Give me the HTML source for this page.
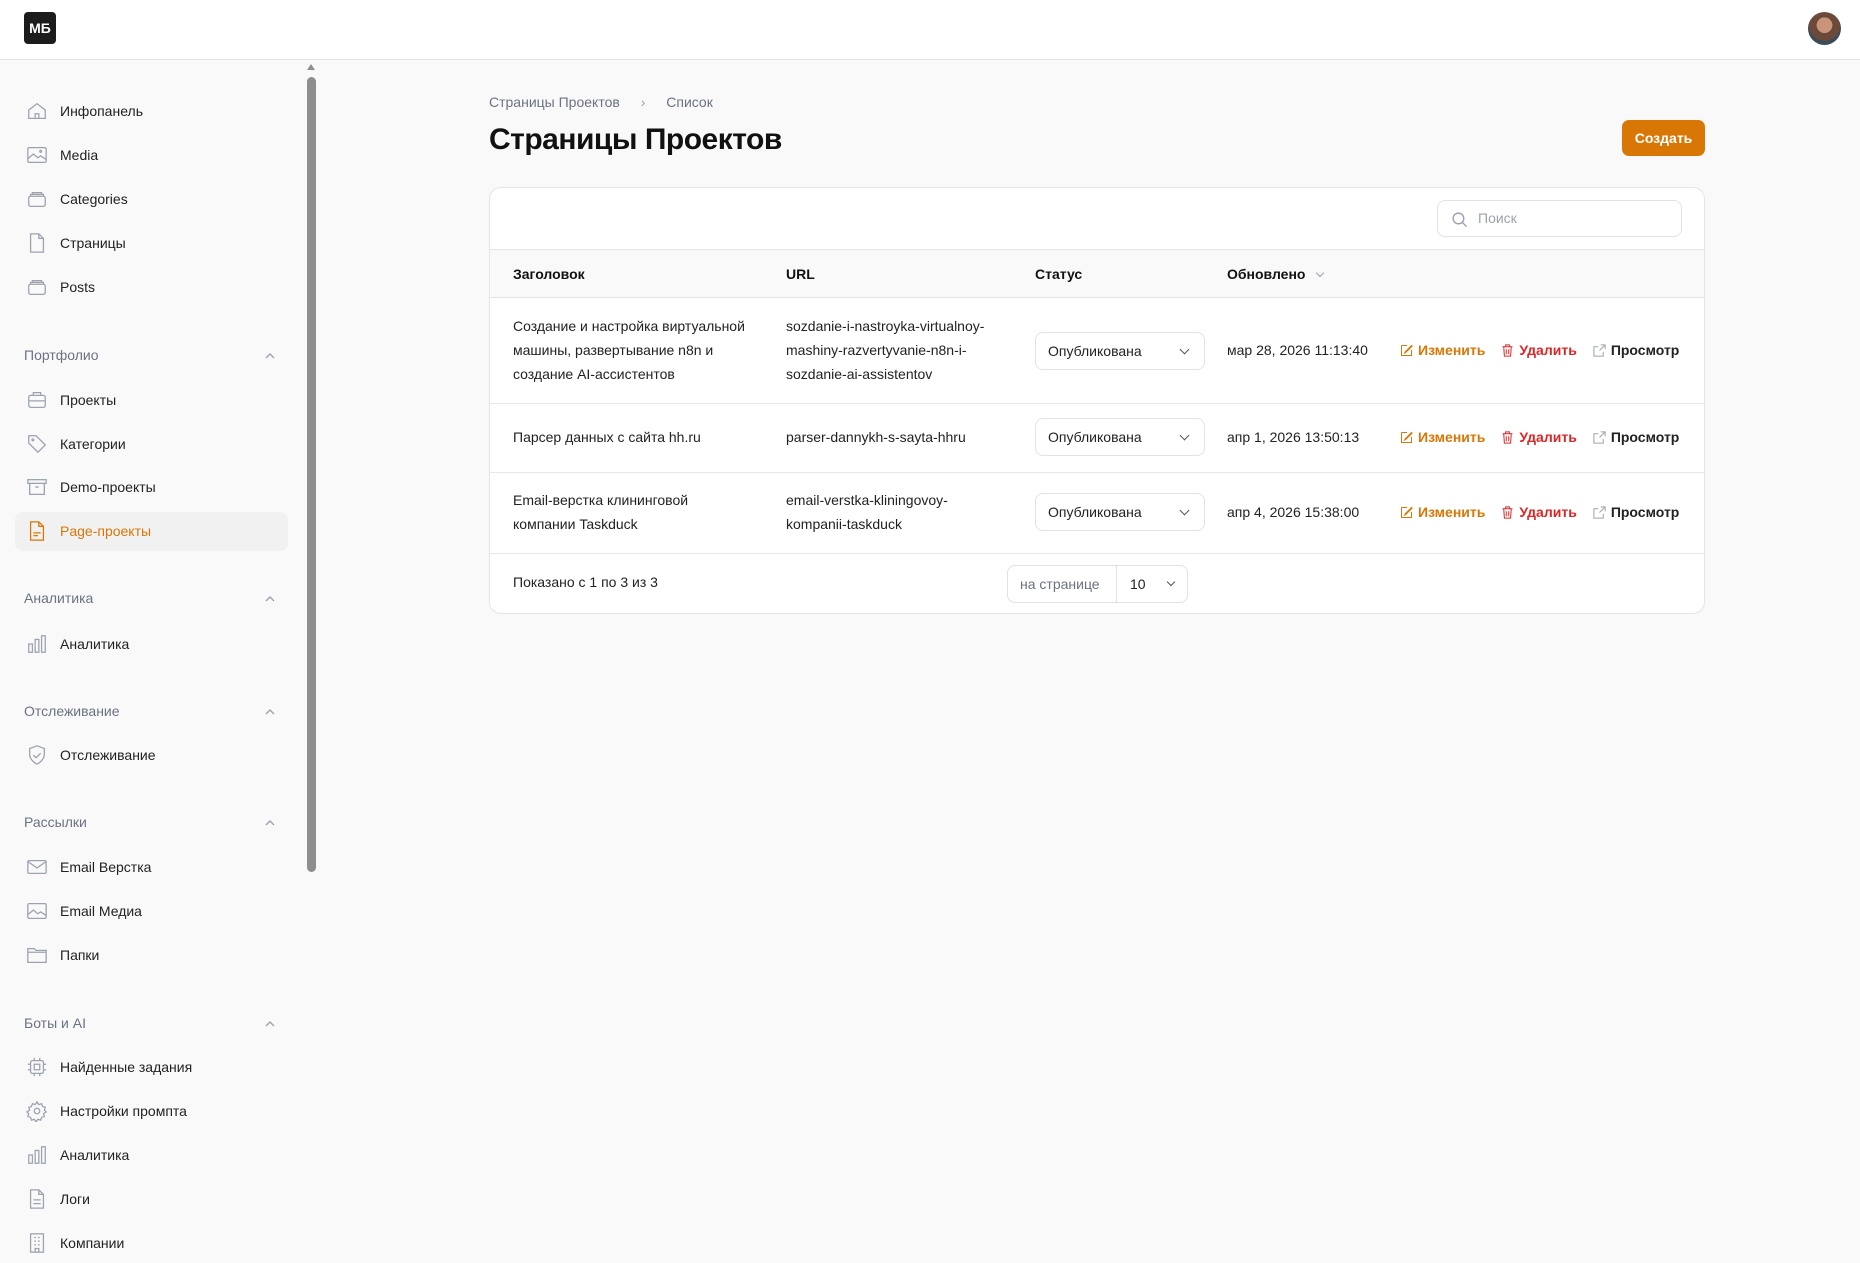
<!DOCTYPE html>
<html><head><meta charset="utf-8">
<style>
*{box-sizing:border-box;margin:0;padding:0}
body{width:1860px;height:1263px;overflow:hidden;background:#f9f9f9;font-family:"Liberation Sans","Noto Sans CJK SC",sans-serif;color:#111;position:relative;font-size:14px}
.hdr{position:absolute;left:0;top:0;width:1860px;height:60px;background:#fff;border-bottom:1px solid #e5e5e5}
.logo{position:absolute;left:24px;top:12px;width:32px;height:32px;background:#1c1c1c;border-radius:4px;color:#fff;font-weight:bold;font-size:14px;line-height:32px;text-align:center}
.av{position:absolute;left:1808px;top:12px;width:33px;height:33px;border-radius:50%;background:radial-gradient(circle at 50% 40%,#c99479 0 30%,#6b4a3a 31% 60%,#3b4b5a 61%)}
.sb{position:absolute;left:0;top:61px;width:305px;height:1202px;background:#f9f9f9}
.scr{position:absolute;left:307px;top:77px;width:9px;height:795px;background:#8e8e8e;border-radius:5px}
.scra{position:absolute;left:307px;top:64px;width:0;height:0;border-left:4.5px solid transparent;border-right:4.5px solid transparent;border-bottom:6px solid #8e8e8e}
.it{position:absolute;left:26px;height:24px;display:flex;align-items:center;font-size:14px;color:#222}
.it svg{width:22px;height:22px;margin-right:12px;fill:none;stroke:#9ca3af;stroke-width:1.4}
.sec{position:absolute;left:24px;font-size:14px;color:#6b7280}
.chev{position:absolute;left:263px;width:14px;height:14px}
.act{position:absolute;left:15px;top:512px;width:273px;height:39px;background:#f1f1f1;border-radius:8px}
.main{position:absolute;left:489px}
.card{position:absolute;left:489px;top:187px;width:1216px;height:427px;background:#fff;border:1px solid #e5e5e5;border-radius:12px;overflow:hidden}
.th{position:absolute;left:0;top:61px;width:100%;height:49px;background:#f9f9f9;border-top:1px solid #e5e5e5;border-bottom:1px solid #e5e5e5}
.t{position:absolute;font-size:14px;line-height:24px;color:#222}
.b{font-weight:bold;color:#111}
.line{position:absolute;left:0;width:100%;height:1px;background:#e8e8e8}
.sel{position:absolute;left:545px;width:170px;height:38px;border:1px solid #e2e2e2;border-radius:8px;font-size:14px;line-height:36px;padding-left:12px;color:#222;background:#fff}
.sel:after{content:"";position:absolute;right:16px;top:13px;width:6px;height:6px;border-right:1.5px solid #555;border-bottom:1.5px solid #555;transform:rotate(45deg)}
.acts{position:absolute;left:909px;display:flex;align-items:center;font-size:14px;font-weight:bold}
.acts svg{width:15px;height:15px;margin-right:4px;fill:none;stroke-width:1.6}
</style></head><body>
<div class="hdr"><div class="logo">МБ</div><div class="av"></div></div>
<div class="sb"></div>
<div class="scra"></div><div class="scr"></div>
<div class="act"></div>

<div class="it" style="top:99px"><svg viewBox="0 0 24 24"><path d="M3 11l9-7 9 7v9H3z M10 20v-5h4v5"/></svg>Инфопанель</div>
<div class="it" style="top:143px"><svg viewBox="0 0 24 24"><rect x="2" y="4" width="20" height="16" rx="1.5"/><path d="M2 16l6-5 5 4 3-2 6 4"/><circle cx="16" cy="8" r="1"/></svg>Media</div>
<div class="it" style="top:187px"><svg viewBox="0 0 24 24"><rect x="3" y="9" width="18" height="11" rx="2"/><path d="M5 9V7h14v2M7 7V5h10v2"/></svg>Categories</div>
<div class="it" style="top:231px"><svg viewBox="0 0 24 24"><path d="M5 2h9l5 5v15H5z M14 2v5h5"/></svg>Страницы</div>
<div class="it" style="top:275px"><svg viewBox="0 0 24 24"><rect x="3" y="9" width="18" height="11" rx="2"/><path d="M5 9V7h14v2M7 7V5h10v2"/></svg>Posts</div>

<div class="sec" style="top:347px">Портфолио</div>
<svg class="chev" style="top:349px" viewBox="0 0 14 14" fill="none" stroke="#9ca3af" stroke-width="1.4"><path d="M3 9l4-4 4 4"/></svg>
<div class="it" style="top:388px"><svg viewBox="0 0 24 24"><rect x="3" y="7" width="18" height="13" rx="2"/><path d="M8 7V4h8v3M3 13h18"/></svg>Проекты</div>
<div class="it" style="top:432px"><svg viewBox="0 0 24 24"><path d="M3 3h8l10 10-8 8L3 11z"/><circle cx="7.5" cy="7.5" r="1"/></svg>Категории</div>
<div class="it" style="top:475px"><svg viewBox="0 0 24 24"><rect x="2" y="4" width="20" height="4"/><path d="M4 8v12h16V8M10 12h4"/></svg>Demo-проекты</div>
<div class="it" style="top:519px;color:#d97706"><svg viewBox="0 0 24 24" style="stroke:#d97706"><path d="M5 2h9l5 5v15H5z M14 2v5h5M8 14h8M8 17h5"/></svg>Page-проекты</div>

<div class="sec" style="top:590px">Аналитика</div>
<svg class="chev" style="top:592px" viewBox="0 0 14 14" fill="none" stroke="#9ca3af" stroke-width="1.4"><path d="M3 9l4-4 4 4"/></svg>
<div class="it" style="top:632px"><svg viewBox="0 0 24 24"><rect x="3" y="12" width="4" height="9"/><rect x="10" y="7" width="4" height="14"/><rect x="17" y="3" width="4" height="18"/></svg>Аналитика</div>

<div class="sec" style="top:703px">Отслеживание</div>
<svg class="chev" style="top:705px" viewBox="0 0 14 14" fill="none" stroke="#9ca3af" stroke-width="1.4"><path d="M3 9l4-4 4 4"/></svg>
<div class="it" style="top:743px"><svg viewBox="0 0 24 24"><path d="M12 2l8 3v6c0 5-4 9-8 11-4-2-8-6-8-11V5z M8 12l3 3 5-5"/></svg>Отслеживание</div>

<div class="sec" style="top:814px">Рассылки</div>
<svg class="chev" style="top:816px" viewBox="0 0 14 14" fill="none" stroke="#9ca3af" stroke-width="1.4"><path d="M3 9l4-4 4 4"/></svg>
<div class="it" style="top:855px"><svg viewBox="0 0 24 24"><rect x="2" y="5" width="20" height="14" rx="1.5"/><path d="M2 6l10 7 10-7"/></svg>Email Верстка</div>
<div class="it" style="top:899px"><svg viewBox="0 0 24 24"><rect x="2" y="4" width="20" height="16" rx="1.5"/><path d="M2 16l6-5 5 4 3-2 6 4"/></svg>Email Медиа</div>
<div class="it" style="top:943px"><svg viewBox="0 0 24 24"><path d="M2 5h7l2 2h11v13H2z M2 9h20"/></svg>Папки</div>

<div class="sec" style="top:1015px">Боты и AI</div>
<svg class="chev" style="top:1017px" viewBox="0 0 14 14" fill="none" stroke="#9ca3af" stroke-width="1.4"><path d="M3 9l4-4 4 4"/></svg>
<div class="it" style="top:1055px"><svg viewBox="0 0 24 24"><rect x="5" y="5" width="14" height="14" rx="2"/><rect x="9" y="9" width="6" height="6"/><path d="M9 2v3M15 2v3M9 19v3M15 19v3M2 9h3M2 15h3M19 9h3M19 15h3"/></svg>Найденные задания</div>
<div class="it" style="top:1099px"><svg viewBox="0 0 24 24"><circle cx="12" cy="12" r="3"/><path d="M12 2l2 3 3-1 1 3 3 1-1 3 2 2-3 2 1 3-3 1-1 3-3-1-2 3-2-3-3 1-1-3-3-1 1-3-2-2 3-2-1-3 3-1 1-3 3 1z"/></svg>Настройки промпта</div>
<div class="it" style="top:1143px"><svg viewBox="0 0 24 24"><rect x="3" y="12" width="4" height="9"/><rect x="10" y="7" width="4" height="14"/><rect x="17" y="3" width="4" height="18"/></svg>Аналитика</div>
<div class="it" style="top:1187px"><svg viewBox="0 0 24 24"><path d="M5 2h9l5 5v15H5z M14 2v5h5M8 13h8M8 17h8"/></svg>Логи</div>
<div class="it" style="top:1231px"><svg viewBox="0 0 24 24"><rect x="5" y="2" width="14" height="20"/><path d="M9 6h2M13 6h2M9 10h2M13 10h2M9 14h2M13 14h2M10 22v-4h4v4"/></svg>Компании</div>

<div class="main" style="top:94px;font-size:14px;color:#6b7280">Страницы Проектов <span style="margin:0 17px 0 17px;color:#9ca3af">›</span> Список</div>
<div class="main" style="top:123px;font-size:30px;font-weight:bold;color:#111;letter-spacing:-0.5px">Страницы Проектов</div>
<div style="position:absolute;left:1622px;top:120px;width:83px;height:36px;background:#d97706;border-radius:7px;color:#fff;font-weight:bold;font-size:14px;line-height:36px;text-align:center">Создать</div>

<div class="card">
  <div style="position:absolute;left:947px;top:12px;width:245px;height:37px;border:1px solid #e2e2e2;border-radius:8px">
    <svg style="position:absolute;left:13px;top:10px" width="17" height="17" viewBox="0 0 24 24" fill="none" stroke="#9ca3af" stroke-width="2"><circle cx="10.5" cy="10.5" r="7.5"/><path d="M16 16l6 6"/></svg>
    <span style="position:absolute;left:40px;top:9px;color:#9ca3af;font-size:14px">Поиск</span>
  </div>
  <div class="th"></div>
  <div class="t b" style="left:23px;top:74px">Заголовок</div>
  <div class="t b" style="left:296px;top:74px">URL</div>
  <div class="t b" style="left:545px;top:74px">Статус</div>
  <div class="t b" style="left:737px;top:74px">Обновлено <span style="display:inline-block;width:6px;height:6px;border-right:1.3px solid #9ca3af;border-bottom:1.3px solid #9ca3af;transform:rotate(45deg);margin:0 0 3px 8px"></span></div>

  <div class="t" style="left:23px;top:126px">Создание и настройка виртуальной<br>машины, развертывание n8n и<br>создание AI-ассистентов</div>
  <div class="t" style="left:296px;top:126px">sozdanie-i-nastroyka-virtualnoy-<br>mashiny-razvertyvanie-n8n-i-<br>sozdanie-ai-assistentov</div>
  <div class="sel" style="top:144px">Опубликована</div>
  <div class="t" style="left:737px;top:150px">мар 28, 2026 11:13:40</div>
  <div class="line" style="top:215px"></div>

  <div class="t" style="left:23px;top:237px">Парсер данных с сайта hh.ru</div>
  <div class="t" style="left:296px;top:237px">parser-dannykh-s-sayta-hhru</div>
  <div class="sel" style="top:230px">Опубликована</div>
  <div class="t" style="left:737px;top:237px">апр 1, 2026 13:50:13</div>
  <div class="line" style="top:284px"></div>

  <div class="t" style="left:23px;top:300px">Email-верстка клининговой<br>компании Taskduck</div>
  <div class="t" style="left:296px;top:300px">email-verstka-kliningovoy-<br>kompanii-taskduck</div>
  <div class="sel" style="top:305px">Опубликована</div>
  <div class="t" style="left:737px;top:312px">апр 4, 2026 15:38:00</div>
  <div class="line" style="top:365px"></div>

  <div class="acts" style="top:154px"><svg viewBox="0 0 24 24" stroke="#d97706"><path d="M4 4h9M4 4v16h16v-9M10 14l10-10 1 1-10 10-2 1z"/></svg><span style="color:#d97706">Изменить</span><svg viewBox="0 0 24 24" stroke="#dc2626" style="margin-left:15px"><path d="M4 6h16M9 6V3h6v3M6 6l1 15h10l1-15M10 10v8M14 10v8"/></svg><span style="color:#dc2626">Удалить</span><svg viewBox="0 0 24 24" stroke="#9ca3af" style="margin-left:15px"><path d="M14 3h7v7M21 3l-9 9M18 14v7H3V6h7"/></svg><span style="color:#222">Просмотр</span></div>
  <div class="acts" style="top:241px"><svg viewBox="0 0 24 24" stroke="#d97706"><path d="M4 4h9M4 4v16h16v-9M10 14l10-10 1 1-10 10-2 1z"/></svg><span style="color:#d97706">Изменить</span><svg viewBox="0 0 24 24" stroke="#dc2626" style="margin-left:15px"><path d="M4 6h16M9 6V3h6v3M6 6l1 15h10l1-15M10 10v8M14 10v8"/></svg><span style="color:#dc2626">Удалить</span><svg viewBox="0 0 24 24" stroke="#9ca3af" style="margin-left:15px"><path d="M14 3h7v7M21 3l-9 9M18 14v7H3V6h7"/></svg><span style="color:#222">Просмотр</span></div>
  <div class="acts" style="top:316px"><svg viewBox="0 0 24 24" stroke="#d97706"><path d="M4 4h9M4 4v16h16v-9M10 14l10-10 1 1-10 10-2 1z"/></svg><span style="color:#d97706">Изменить</span><svg viewBox="0 0 24 24" stroke="#dc2626" style="margin-left:15px"><path d="M4 6h16M9 6V3h6v3M6 6l1 15h10l1-15M10 10v8M14 10v8"/></svg><span style="color:#dc2626">Удалить</span><svg viewBox="0 0 24 24" stroke="#9ca3af" style="margin-left:15px"><path d="M14 3h7v7M21 3l-9 9M18 14v7H3V6h7"/></svg><span style="color:#222">Просмотр</span></div>

  <div class="t" style="left:23px;top:382px">Показано с 1 по 3 из 3</div>
  <div style="position:absolute;left:517px;top:377px;width:181px;height:38px;border:1px solid #e2e2e2;border-radius:8px;font-size:14px;line-height:36px;color:#222">
    <span style="position:absolute;left:12px;color:#6b7280">на странице</span>
    <div style="position:absolute;left:108px;top:0;width:1px;height:36px;background:#e2e2e2"></div>
    <span style="position:absolute;left:122px">10</span>
    <span style="position:absolute;left:160px;top:13px;width:6px;height:6px;border-right:1.5px solid #555;border-bottom:1.5px solid #555;transform:rotate(45deg)"></span>
  </div>
</div>
</body></html>
